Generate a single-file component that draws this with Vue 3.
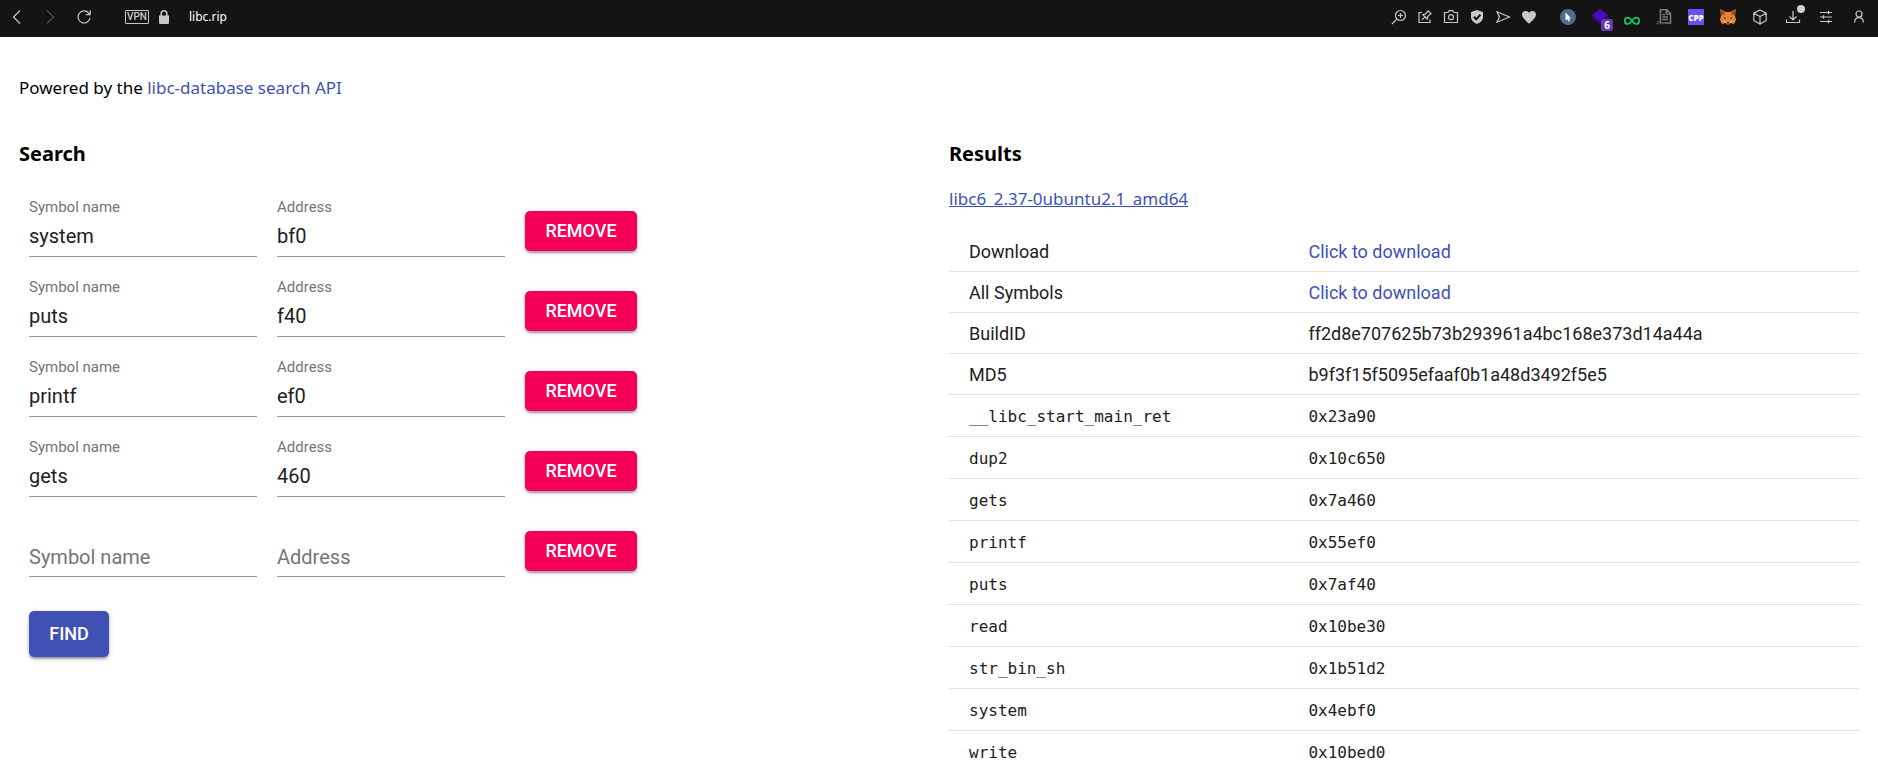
<script setup>
import { ref } from 'vue'

const rows = ref([
  { symbol: 'system', address: 'bf0' },
  { symbol: 'puts', address: 'f40' },
  { symbol: 'printf', address: 'ef0' },
  { symbol: 'gets', address: '460' },
  { symbol: '', address: '' }
])

const fields = [
  { key: 'symbol', label: 'Symbol name' },
  { key: 'address', label: 'Address' }
]

const details = [
  { name: 'Download', value: 'Click to download', link: true },
  { name: 'All Symbols', value: 'Click to download', link: true },
  { name: 'BuildID', value: 'ff2d8e707625b73b293961a4bc168e373d14a44a' },
  { name: 'MD5', value: 'b9f3f15f5095efaaf0b1a48d3492f5e5' },
  { name: '__libc_start_main_ret', value: '0x23a90', code: true },
  { name: 'dup2', value: '0x10c650', code: true },
  { name: 'gets', value: '0x7a460', code: true },
  { name: 'printf', value: '0x55ef0', code: true },
  { name: 'puts', value: '0x7af40', code: true },
  { name: 'read', value: '0x10be30', code: true },
  { name: 'str_bin_sh', value: '0x1b51d2', code: true },
  { name: 'system', value: '0x4ebf0', code: true },
  { name: 'write', value: '0x10bed0', code: true }
]

function removeRow(index) {
  rows.value.splice(index, 1)
}
</script>

<template>
  <div class="browser">
    <header class="bar">
      <nav class="nav" aria-label="Navigation">
        <button type="button" aria-label="Back">
          <svg width="16" height="16" viewBox="0 0 16 16"><path d="M12 1.5 L5.5 8 L12 14.5" /></svg>
        </button>
        <button type="button" aria-label="Forward" class="dim">
          <svg width="16" height="16" viewBox="0 0 16 16"><path d="M5 1.5 L11.5 8 L5 14.5" /></svg>
        </button>
        <button type="button" aria-label="Reload">
          <svg width="16" height="16" viewBox="0 0 16 16"><path d="M14 9 A6 6 0 1 1 12.6 4 L14 5.4 M14.2 1.2 V5.6 H9.8" /></svg>
        </button>
      </nav>
      <div class="site">
        <span class="vpn">VPN</span>
        <svg class="solid" width="10" height="14" viewBox="0 0 10 14"><path d="M0 5.5 H10 V13 Q10 14 9 14 H1 Q0 14 0 13 Z" /><path class="lock-arc" d="M2.2 6 V3.6 A2.8 2.8 0 0 1 7.8 3.6 V6" /></svg>
        <span class="url">libc.rip</span>
      </div>
      <div class="tools">
        <button type="button" aria-label="Zoom">
          <svg width="16" height="16" viewBox="0 0 16 16"><circle cx="9.5" cy="6.5" r="5" /><path d="M5.8 10.2 L1 15 M9.5 4 V9 M7 6.5 H12" /></svg>
        </button>
        <button type="button" aria-label="Pinboards">
          <svg width="16" height="16" viewBox="0 0 16 16"><path d="M5 3.5 H2 V13.5 H13 V10.5 M5 10.8 L8 7.8 M5.8 5.6 L10.3 10 L10.9 7.4 L14 4.6 L11.2 1.8 L8.4 5 Z" /></svg>
        </button>
        <button type="button" aria-label="Snapshot">
          <svg width="16" height="16" viewBox="0 0 16 16"><path d="M1.5 3.5 H5 L6.2 1.7 H9.8 L11 3.5 H14.5 V13.5 H1.5 Z" /><circle cx="8" cy="8.2" r="2.5" /></svg>
        </button>
        <button type="button" aria-label="Ad blocker">
          <svg class="solid" width="16" height="16" viewBox="0 0 16 16"><path d="M8 1 L14 3 V8.5 Q13.5 12.5 8 15 Q2.5 12.5 2 8.5 V3 Z" /><path class="check" d="M4.8 7.8 L7.2 10.2 L11.4 5.8" /></svg>
        </button>
        <button type="button" aria-label="Send">
          <svg width="16" height="16" viewBox="0 0 16 16"><path d="M2 2.8 L14.5 8 L2 13.2 L4.5 8 Z" /></svg>
        </button>
        <button type="button" aria-label="Favorite">
          <svg class="solid" width="16" height="16" viewBox="0 0 16 16"><path d="M8 14.8 C5 12 1 8.8 1 5.6 C1 1.6 6.2 .8 8 4 C9.8 .8 15 1.6 15 5.6 C15 8.8 11 12 8 14.8 Z" /></svg>
        </button>
      </div>
      <div class="extensions">
        <button type="button" aria-label="Pointer extension">
          <svg class="art" width="16" height="16" viewBox="0 0 16 16"><circle cx="8" cy="8" r="8" fill="#4f6b8d" /><path d="M5.5 3.5 V11.5 L7.4 10 L8.6 12.5 L10 11.8 L8.9 9.4 H11.2 Z" fill="#fff" /></svg>
        </button>
        <button type="button" aria-label="Layers extension, 6">
          <svg class="art" width="16" height="16" viewBox="0 0 16 16"><path d="M0 6 L8 11 L16 6 V9 L8 15 L0 9 Z" fill="#2c0a78" /><path d="M8 0 L16 6 L8 12 L0 6 Z" fill="#4a0db5" /></svg>
          <span class="count">6</span>
        </button>
        <button type="button" aria-label="Infinity extension">
          <svg class="art" width="16" height="16" viewBox="0 0 16 16"><path d="M8 11.8 C6.5 9.8 5.5 8.6 4 8.6 A3.2 3.2 0 0 0 4 15 C5.5 15 6.5 13.8 8 11.8 C9.5 9.8 10.5 8.6 12 8.6 A3.2 3.2 0 0 1 12 15 C10.5 15 9.5 13.8 8 11.8 Z" fill="none" stroke="#10c46c" stroke-width="1.7" /></svg>
        </button>
        <button type="button" aria-label="Document extension">
          <svg width="16" height="16" viewBox="0 0 16 16"><path d="M4.5 .8 H11 L14.5 4.5 V14 H4.5 Z M10.5 1 V5 H14.5 M6.5 5.5 H9 M6.5 8 H12 M6.5 10.5 H12" stroke="#777" stroke-width="1.6" /><path d="M0 14.5 H9 M1 12.5 H4" stroke="#444" stroke-width="1.6" /></svg>
        </button>
        <button type="button" aria-label="CPP extension">
          <span class="cpp">CPP</span>
        </button>
        <button type="button" aria-label="Wallet extension">
          <svg class="art" width="16" height="16" viewBox="0 0 16 16"><path d="M0 0 L6 3 H10 L16 0 L15 7 L16 11 L14 15 L10 14 L9 15.5 H7 L6 14 L2 15 L0 11 L1 7 Z" fill="#e8822b" /><path d="M0 0 L5.5 4 L1.5 7 Z M16 0 L10.5 4 L14.5 7 Z" fill="#8f4a20" /><path d="M3.5 8 L6.5 9.5 L4.5 10 Z M12.5 8 L9.5 9.5 L11.5 10 Z M6.5 13 H9.5 L9 14.5 H7 Z" fill="#232d3a" /><path d="M4 13 L6 12 L6.5 14.5 Z M12 13 L10 12 L9.5 14.5 Z" fill="#dcc4b2" /></svg>
        </button>
      </div>
      <div class="system">
        <button type="button" aria-label="Extensions">
          <svg width="16" height="16" viewBox="0 0 16 16"><path d="M8 1 L14.2 4.2 V11.5 L8 15 L1.8 11.5 V4.2 Z M1.8 4.2 L8 7.6 L14.2 4.2 M8 7.6 V15" /></svg>
        </button>
        <button type="button" aria-label="Downloads">
          <svg width="16" height="16" viewBox="0 0 16 16"><path d="M8 2 V11 M4.5 7.5 L8 11 L11.5 7.5 M1.5 10.5 V13.5 H14.5 V10.5" /></svg>
          <span class="dot"></span>
        </button>
        <button type="button" aria-label="Easy setup">
          <svg width="16" height="16" viewBox="0 0 16 16"><path d="M2 3.5 H14 M2 8 H14 M2 12.5 H14 M10.5 1.8 V5.2 M5.5 6.3 V9.7 M10.5 10.8 V14.2" /></svg>
        </button>
        <button type="button" aria-label="Profile">
          <svg width="16" height="16" viewBox="0 0 16 16"><circle cx="8" cy="5" r="3" /><path d="M3.5 13.5 Q4 8.6 8 8.6 Q12 8.6 12.5 13.5" /></svg>
        </button>
      </div>
    </header>

    <main class="page">
      <p class="powered">Powered by the <a href="#api">libc-database search API</a></p>
      <div class="columns">
        <section>
          <h2>Search</h2>
          <form class="search" @submit.prevent>
            <div v-for="(row, i) in rows" :key="i" class="row">
              <div v-for="field in fields" :key="field.key" class="field">
                <label :for="field.key + i" :class="{ resting: !row[field.key] }">{{ field.label }}</label>
                <input :id="field.key + i" v-model="row[field.key]" type="text" autocomplete="off" spellcheck="false" />
              </div>
              <button type="button" class="btn remove" @click="removeRow(i)">REMOVE</button>
            </div>
            <button type="submit" class="btn find">FIND</button>
          </form>
        </section>

        <section>
          <h2>Results</h2>
          <a class="match" href="#libc6_2.37-0ubuntu2.1_amd64">libc6_2.37-0ubuntu2.1_amd64</a>
          <table>
            <tbody>
              <tr v-for="item in details" :key="item.name" :class="{ code: item.code }">
                <th scope="row">{{ item.name }}</th>
                <td>
                  <a v-if="item.link" href="#download">{{ item.value }}</a>
                  <template v-else>{{ item.value }}</template>
                </td>
              </tr>
            </tbody>
          </table>
        </section>
      </div>
    </main>
  </div>
</template>

<style>
html,
body {
  background: #fff;
}
body {
  margin: 0;
}
</style>

<style scoped>
.browser {
  height: 100vh;
  overflow: hidden;
  font-family: "Noto Sans", "Open Sans", sans-serif;
  color: #000;
}
button {
  margin: 0;
  padding: 0;
  border: 0;
  background: none;
  cursor: pointer;
}
a {
  color: #3f51b5;
  text-decoration: none;
}

.bar {
  display: flex;
  align-items: center;
  box-sizing: border-box;
  height: 37px;
  padding: 0 11px 3px 8px;
  background: #141414;
  color: #c8c8c8;
}
.bar button {
  position: relative;
  display: block;
  width: 16px;
  height: 16px;
  color: inherit;
}
.bar svg {
  display: block;
  fill: none;
  stroke: currentColor;
  stroke-width: 1.2;
}
.bar svg.solid {
  fill: currentColor;
  stroke: none;
}
.bar svg.art {
  stroke: none;
}
.lock-arc {
  fill: none;
  stroke: currentColor;
  stroke-width: 1.6;
}
.check {
  fill: none;
  stroke: #141414;
  stroke-width: 2;
}
.nav {
  display: flex;
  gap: 18px;
}
.bar .dim {
  color: #4c4c4c;
}
.site {
  display: flex;
  align-items: center;
  flex: 1;
  gap: 10px;
  margin-left: 33px;
}
.vpn {
  box-sizing: border-box;
  width: 24px;
  height: 14px;
  border: 1px solid #c8c8c8;
  border-radius: 1px;
  font: 500 10px/12px Roboto, sans-serif;
  text-align: center;
}
.url {
  margin-left: 10px;
  color: #fff;
  font-size: 12px;
  line-height: 16px;
}
.tools {
  display: flex;
  gap: 10px;
  margin-right: 23px;
}
.extensions {
  display: flex;
  gap: 16px;
  margin-right: 16px;
}
.system {
  display: flex;
  gap: 17px;
}
.count {
  position: absolute;
  left: 9px;
  top: 10px;
  width: 12px;
  height: 12px;
  border-radius: 2px;
  background: #673ab7;
  color: #fff;
  font: 700 10px/12px "Noto Sans", sans-serif;
}
.cpp {
  display: block;
  width: 16px;
  height: 16px;
  background: #6554f0;
  color: #fff;
  font: 800 8px/18px "Open Sans", sans-serif;
  text-align: center;
}
.dot {
  position: absolute;
  right: -4px;
  top: -4px;
  width: 8px;
  height: 8px;
  border-radius: 50%;
  background: #d0d0d0;
}

.page {
  padding: 36px 19px 0;
}
.powered {
  margin: 0;
  font-size: 17px;
  line-height: 30px;
}
.columns {
  display: grid;
  grid-template-columns: 1fr 1fr;
  gap: 20px;
  margin-top: 36px;
}
h2 {
  margin: 0;
  font-size: 20px;
  font-weight: 700;
  line-height: 30px;
}

.search {
  padding: 28px 10px 0;
}
.row {
  display: flex;
  align-items: flex-start;
  gap: 20px;
  height: 80px;
}
.field {
  display: grid;
  grid-template-rows: 20px 40px;
  width: 228px;
  font-family: Roboto, sans-serif;
}
.field label {
  grid-area: 1 / 1;
  color: #757575;
  font-size: 15px;
  line-height: 20px;
}
.field label.resting {
  grid-area: 2 / 1;
  font-size: 20px;
  line-height: 40px;
  pointer-events: none;
}
.field input {
  grid-area: 2 / 1;
  box-sizing: border-box;
  width: 100%;
  height: 40px;
  padding: 0 0 2px;
  border: 0;
  border-bottom: 1px solid #949494;
  outline: 0;
  background: transparent;
  color: #212121;
  font: 400 20px/24px Roboto, sans-serif;
}
.btn {
  border-radius: 5px;
  box-shadow: 0 3px 3px -2px rgba(0, 0, 0, 0.3), 0 2px 3px rgba(0, 0, 0, 0.2), 0 1px 6px rgba(0, 0, 0, 0.12);
  color: #fff;
  font: 500 18px/24px Roboto, sans-serif;
}
.remove {
  width: 112px;
  height: 40px;
  margin-top: 14px;
  background: #f50057;
}
.find {
  display: block;
  width: 80px;
  height: 46px;
  margin-top: 14px;
  background: #3f51b5;
}

.match {
  display: block;
  width: max-content;
  margin-top: 15px;
  font-size: 17px;
  line-height: 30px;
  text-decoration: underline;
}
table {
  width: 100%;
  margin-top: 17px;
  border-spacing: 0;
  table-layout: fixed;
  color: #212121;
  font: 400 18px/24px Roboto, sans-serif;
}
th,
td {
  box-sizing: border-box;
  height: 41px;
  padding: 2px 20px 0;
  border-bottom: 1px solid #e0e0e0;
  font-weight: 400;
  text-align: left;
}
th {
  width: 37.3%;
}
.code th,
.code td {
  height: 42px;
  font-family: "DejaVu Sans Mono", monospace;
  font-size: 16px;
}
</style>
